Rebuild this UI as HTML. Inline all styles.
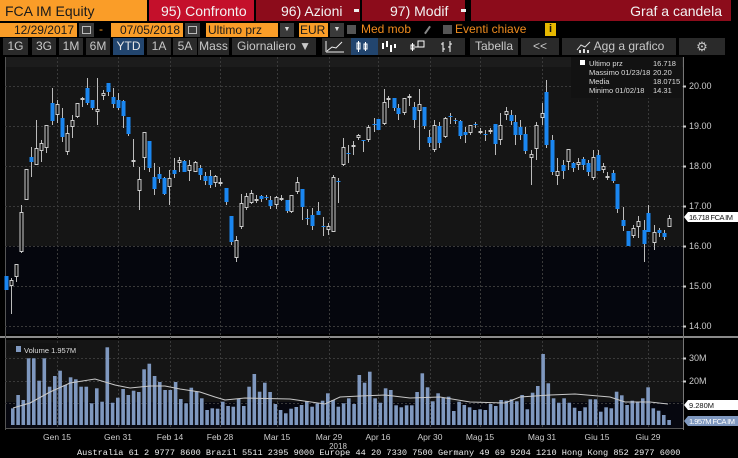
<!DOCTYPE html>
<html><head><meta charset="utf-8"><style>
*{margin:0;padding:0;box-sizing:border-box}
body{width:738px;height:454px;background:#000;overflow:hidden;position:relative;font-family:"Liberation Sans",sans-serif}
.a{position:absolute;white-space:nowrap}
.or{background:#fa9d28;color:#1a1a1a}
.btn{background:#2a2a2a;color:#c8c8c8;font-size:12px;text-align:center;line-height:17px;height:17px;top:38px}
</style></head><body>
<!-- row 1 -->
<div class="a or" style="left:0;top:0;width:147px;height:21px;font-size:14px;line-height:22px;padding-left:5px">FCA IM Equity</div>
<div class="a" style="left:149px;top:0;width:105px;height:21px;background:#c4102b;color:#f2f2f2;font-size:14px;line-height:22px;padding-left:12px">95) Confronto</div>
<div class="a" style="left:256px;top:0;width:104px;height:21px;background:#8c0c1b;color:#f2f2f2;font-size:14px;line-height:22px;padding-left:25px">96) Azioni</div>
<div class="a" style="left:354px;top:9px;width:5px;height:3px;background:#eee"></div>
<div class="a" style="left:362px;top:0;width:103px;height:21px;background:#8c0c1b;color:#f2f2f2;font-size:14px;line-height:22px;padding-left:28px">97) Modif</div>
<div class="a" style="left:461px;top:9px;width:5px;height:3px;background:#eee"></div>
<div class="a" style="left:471px;top:0;width:260px;height:21px;background:#8c0c1b;color:#f2f2f2;font-size:14px;line-height:22px;text-align:right;padding-right:9px">Graf a candela</div>
<!-- row 2 -->
<div class="a or" style="left:0;top:23px;width:77px;height:14px;font-size:12px;line-height:14px;text-align:right;padding-right:3px">12/29/2017</div>
<div class="a" style="left:79px;top:23px;width:15px;height:14px;background:#3a3a3a"></div>
<div class="a" style="left:82px;top:26px;width:9px;height:8px;border:1px solid #bbb"></div>
<div class="a" style="left:99px;top:22px;color:#fa9d28;font-size:12px">-</div>
<div class="a or" style="left:111px;top:23px;width:72px;height:14px;font-size:12px;line-height:14px;text-align:right;padding-right:3px">07/05/2018</div>
<div class="a" style="left:185px;top:23px;width:15px;height:14px;background:#3a3a3a"></div>
<div class="a" style="left:188px;top:26px;width:9px;height:8px;border:1px solid #bbb"></div>
<div class="a or" style="left:206px;top:23px;width:72px;height:14px;font-size:12px;line-height:14px;padding-left:2px">Ultimo prz</div>
<div class="a" style="left:280px;top:23px;width:14px;height:14px;background:#3a3a3a;color:#ddd;font-size:7px;text-align:center;line-height:14px">▼</div>
<div class="a or" style="left:299px;top:23px;width:29px;height:14px;font-size:12px;line-height:14px;padding-left:1px">EUR</div>
<div class="a" style="left:330px;top:23px;width:14px;height:14px;background:#3a3a3a;color:#ddd;font-size:7px;text-align:center;line-height:14px">▼</div>
<div class="a" style="left:347px;top:25px;width:9px;height:9px;background:#555"></div>
<div class="a" style="left:361px;top:22px;color:#f08c1e;font-size:12px">Med mob</div>
<div class="a" style="left:423px;top:29px;width:9px;height:2px;background:#888;transform:rotate(-55deg)"></div>
<div class="a" style="left:443px;top:25px;width:9px;height:9px;background:#555"></div>
<div class="a" style="left:455px;top:22px;color:#f08c1e;font-size:12px">Eventi chiave</div>
<div class="a" style="left:545px;top:23px;width:11px;height:13px;background:#e6b800;color:#111;font-size:11px;text-align:center;line-height:13px;font-weight:bold">i</div>
<!-- row 3 -->
<div class="a btn" style="left:3px;width:25px">1G</div>
<div class="a btn" style="left:32px;width:24px">3G</div>
<div class="a btn" style="left:59px;width:24px">1M</div>
<div class="a btn" style="left:86px;width:24px">6M</div>
<div class="a btn" style="left:113px;width:31px;background:#22456e;color:#e8e8e8">YTD</div>
<div class="a btn" style="left:147px;width:24px">1A</div>
<div class="a btn" style="left:173px;width:24px">5A</div>
<div class="a btn" style="left:198px;width:31px">Mass</div>
<div class="a btn" style="left:232px;width:84px">Giornaliero ▼</div>
<div class="a btn" style="left:322px;width:143px"></div>
<div class="a" style="left:351px;top:38px;width:27px;height:17px;background:#22456e"></div>
<svg class="a" style="left:322px;top:38px" width="143" height="17">
<polyline points="5,13 10,9 14,10 20,4" fill="none" stroke="#eee" stroke-width="1"/><line x1="4" y1="3" x2="4" y2="14" stroke="#eee"/><line x1="4" y1="14" x2="22" y2="14" stroke="#eee"/>
<g stroke="#fff" fill="none"><rect x="35" y="5" width="3" height="6"/><line x1="36.5" y1="3" x2="36.5" y2="14"/><rect x="42" y="6" width="3" height="5"/><line x1="43.5" y1="4" x2="43.5" y2="13"/></g>
<g fill="#fff"><rect x="60" y="5" width="2" height="6"/><rect x="64" y="3" width="2" height="6"/><rect x="68" y="7" width="2" height="7"/><rect x="72" y="6" width="2" height="4"/></g>
<g stroke="#fff" fill="none"><rect x="89" y="7" width="3" height="4"/><line x1="90.5" y1="5" x2="90.5" y2="13"/><rect x="96" y="3" width="6" height="6"/><line x1="93" y1="9" x2="96" y2="9"/></g>
<g stroke="#fff"><line x1="121" y1="4" x2="121" y2="14"/><line x1="119" y1="6" x2="121" y2="6"/><line x1="121" y1="11" x2="123" y2="11"/><line x1="128" y1="3" x2="128" y2="14"/><line x1="126" y1="9" x2="128" y2="9"/><line x1="128" y1="6" x2="130" y2="6"/></g>
</svg>
<div class="a btn" style="left:470px;width:48px">Tabella</div>
<div class="a btn" style="left:521px;width:38px">&lt;&lt;</div>
<div class="a btn" style="left:562px;width:114px;padding-left:20px">Agg a grafico</div>
<svg class="a" style="left:576px;top:41px" width="16" height="12"><polyline points="1,9 5,4 9,6 14,1" fill="none" stroke="#ddd"/><g fill="#ddd"><rect x="3" y="9" width="2" height="3"/><rect x="7" y="8" width="2" height="4"/><rect x="11" y="9" width="2" height="3"/></g></svg>
<div class="a btn" style="left:679px;width:46px;font-size:13px">⚙</div>

<svg id="ch" class="a" style="left:0;top:57px" width="738" height="397"></svg>
<div class="a" style="left:77px;top:448px;width:661px;overflow:hidden;font-family:'Liberation Mono',monospace;font-size:8.6px;line-height:10px;color:#eee">Australia 61 2 9777 8600 Brazil 5511 2395 9000 Europe 44 20 7330 7500 Germany 49 69 9204 1210 Hong Kong 852 2977 6000</div>

<script>
var s='',O=57;
function Y(y){return y-O}
s+='<rect x="5" y="0" width="678" height="10" fill="#1c1c1c"/>';
s+='<rect x="5" y="10" width="678" height="'+(246-67)+'" fill="#151515"/>';
s+='<rect x="5" y="'+Y(246)+'" width="678" height="'+(334-246)+'" fill="#05060d"/>';
s+='<rect x="0" y="'+Y(336)+'" width="738" height="2" fill="#8a8a8a"/>';
s+='<rect x="5" y="'+Y(340)+'" width="678" height="62" fill="#151515"/>';
s+='<rect x="5" y="'+Y(402)+'" width="678" height="26" fill="#06070f"/>';
s+='<line x1="5.5" y1="0" x2="5.5" y2="'+Y(430)+'" stroke="#555"/>';
s+='<line x1="683.5" y1="0" x2="683.5" y2="'+Y(430)+'" stroke="#777"/>';
s+='<line x1="5" y1="'+Y(428.5)+'" x2="683" y2="'+Y(428.5)+'" stroke="#555"/>';
var vx=[57,118,170,220,277,329,378,430,480,542,597,648];
var vl=['Gen 15','Gen 31','Feb 14','Feb 28','Mar 15','Mar 29','Apr 16','Apr 30','Mag 15','Mag 31','Giu 15','Giu 29'];
vx.forEach(function(x,i){s+='<line x1="'+(x+.5)+'" y1="0" x2="'+(x+.5)+'" y2="'+Y(428)+'" stroke="#3a3a3a" stroke-dasharray="2,2"/>';
s+='<text x="'+x+'" y="'+Y(440)+'" fill="#ccc" font-size="8.5" text-anchor="middle">'+vl[i]+'</text>';});
s+='<text x="338" y="'+Y(449)+'" fill="#ccc" font-size="8" text-anchor="middle">2018</text>';
[20,19,18,17,16,15,14].forEach(function(p){var y=86+(20-p)*40;s+='<line x1="5" y1="'+(Y(y)+.5)+'" x2="683" y2="'+(Y(y)+.5)+'" stroke="#3a3a3a" stroke-dasharray="2,2"/>';
s+='<rect x="683" y="'+(Y(y)-.5)+'" width="3" height="2" fill="#ccc"/><text x="689" y="'+(Y(y)+3)+'" fill="#ccc" font-size="9">'+p.toFixed(2)+'</text>';});
[[358,'30M'],[381,'20M']].forEach(function(a){s+='<line x1="5" y1="'+(Y(a[0])+.5)+'" x2="683" y2="'+(Y(a[0])+.5)+'" stroke="#3a3a3a" stroke-dasharray="2,2"/><rect x="683" y="'+(Y(a[0])-.5)+'" width="3" height="2" fill="#ccc"/><text x="689" y="'+(Y(a[0])+3)+'" fill="#ccc" font-size="9">'+a[1]+'</text>';});
s+='<line x1="5" y1="'+(Y(403)+.5)+'" x2="683" y2="'+(Y(403)+.5)+'" stroke="#3a3a3a" stroke-dasharray="2,2"/>';
var v1=[235,195,210,85,85,152,85,170,138,122,165,142,148,170,170,220,175,215,52,218,203,177,195,182,186,118,101,138,156,180,180,156,207,220,173,185,205,240,235,236,215,228,230,207,228,170,132,185,158,186,222,240,250,236,231,225,213,230,220,212,190,210,230,220,205,222,135,158,125];
var v2=[205,218,175,180,226,232,226,226,186,130,172,214,190,203,200,243,215,225,232,240,238,240,222,228,210,212,208,214,195,238,188,168,72,160,205,218,205,218,233,243,232,208,208,245,232,235,185,196,225,212,215,205,172,235,242,255,270];
var vv=v1.concat(v2);
vv.forEach(function(z,i){var x=11+i*5.25,t=330+z/3;s+='<rect x="'+x.toFixed(1)+'" y="'+Y(t).toFixed(1)+'" width="3.6" height="'+(425-t).toFixed(1)+'" fill="#7f98bf"/>';});
var ma=[[13,408],[30,403],[50,392],[70,383],[95,379],[115,385],[130,388],[150,386],[165,386],[180,389],[200,392],[215,397],[225,400],[245,398],[290,399],[325,404],[340,397],[360,396],[385,395],[410,398],[440,397],[470,402],[505,403],[520,397],[550,395],[575,394],[610,397],[625,402],[650,402],[668,404]];
s+='<polyline fill="none" stroke="#c8c8c8" stroke-width="1" points="'+ma.map(function(p){return p[0]+','+Y(p[1])}).join(' ')+'"/>';
var C=[[6,276,290,276,290,1],[11,280,286,278,314,0],[16,264,277,264,282,0],[21,212,252,205,253,0],[26,169,200,169,200,0],[31,157,162,147,177,1],[36,148,165,120,165,0],[41,143,151,140,162,0],[46,125,148,125,153,0],[52,103,121,88,125,1],[57,104,115,100,123,0],[62,118,137,108,142,1],[67,133,152,125,155,0],[72,120,127,115,138,0],[77,103,117,103,118,0],[82,98,100,97,107,0],[87,88,103,78,105,1],[92,100,108,100,110,1],[97,109,112,78,125,0],[103,93,96,90,100,0],[108,83,92,83,96,1],[113,97,104,88,108,1],[118,100,108,93,110,1],[123,101,116,100,128,1],[128,117,134,117,136,1],[133,160,161,139,167,0],[139,179,191,167,210,0],[144,132,158,132,170,0],[149,141,168,141,172,1],[154,177,189,163,195,1],[159,174,179,167,183,1],[164,178,194,177,195,1],[169,178,187,170,205,0],[174,170,174,158,178,1],[179,160,163,157,172,0],[184,161,172,160,172,1],[189,165,171,160,181,0],[195,162,172,161,172,0],[200,168,175,165,180,1],[205,176,181,172,185,1],[210,176,185,170,188,1],[215,176,183,175,187,0],[220,182,183,178,186,0],[226,188,202,188,205,1],[231,216,242,216,245,1],[236,240,258,236,262,0],[241,203,227,194,229,0],[246,196,208,193,210,0],[251,193,203,190,204,0],[256,199,200,195,203,0],[261,196,199,195,202,1],[266,197,198,195,200,1],[270,200,206,196,209,1],[276,197,205,196,209,0],[281,198,199,195,201,0],[287,200,211,200,213,1],[291,195,212,195,213,0],[297,182,192,177,194,0],[302,189,207,189,220,1],[307,218,219,209,225,1],[312,215,226,208,230,1],[318,211,215,202,215,1],[323,226,227,217,236,1],[328,226,230,223,235,0],[333,177,232,175,232,0],[338,181,182,178,203,1],[343,147,165,138,166,0],[348,153,154,145,163,1],[353,145,147,141,155,0],[358,135,138,134,140,0],[363,140,141,140,152,1],[368,127,140,125,142,0],[374,124,125,118,132,1],[378,119,130,119,130,1],[384,102,124,89,125,0],[388,98,100,96,108,0],[394,98,108,98,111,1],[398,108,114,104,120,1],[404,98,113,98,115,0],[409,96,98,94,106,0],[414,107,120,102,128,1],[419,104,111,89,150,0],[424,107,126,107,129,1],[429,137,143,130,147,1],[434,125,150,120,152,0],[439,126,143,122,148,1],[445,118,137,117,138,0],[450,116,117,113,124,1],[455,120,121,118,124,1],[460,121,136,120,139,1],[465,132,135,127,143,1],[470,125,133,125,135,0],[475,124,125,122,128,1],[480,131,132,128,134,0],[485,134,135,130,141,1],[490,130,131,128,134,0],[495,124,144,124,155,1],[500,125,140,113,145,0],[506,111,115,107,120,0],[511,115,121,110,125,1],[515,122,135,115,145,1],[520,127,135,120,140,1],[525,134,151,127,154,1],[531,154,158,150,185,0],[536,125,149,122,160,0],[542,113,118,103,125,0],[546,92,145,80,148,1],[552,140,172,135,175,1],[557,171,176,158,185,0],[563,165,171,160,179,1],[568,149,162,149,170,0],[573,163,168,162,172,1],[578,162,165,158,170,0],[583,159,165,157,170,1],[588,163,172,160,176,1],[593,157,178,150,180,0],[598,155,171,150,171,1],[603,166,170,163,173,0],[607,176,177,172,180,0],[613,173,181,170,183,1],[617,184,209,184,213,1],[623,220,226,207,231,1],[628,231,246,231,246,1],[633,228,236,225,238,0],[638,221,227,216,238,0],[644,230,244,220,262,1],[648,213,232,205,232,1],[654,232,243,225,250,0],[659,230,233,228,237,1],[664,233,237,230,240,1],[669,218,227,215,227,0]];
C.forEach(function(c){var x=c[0];s+='<line x1="'+(x+.5)+'" y1="'+Y(c[3])+'" x2="'+(x+.5)+'" y2="'+Y(c[4])+'" stroke="#bbb"/>';
var h=Math.max(c[2]-c[1],1);
if(c[5])s+='<rect x="'+(x-1.5)+'" y="'+Y(c[1])+'" width="4" height="'+h+'" fill="#1a86f0"/>';
else s+='<rect x="'+(x-1)+'" y="'+(Y(c[1])+.5)+'" width="3" height="'+Math.max(h-1,1)+'" fill="#111" stroke="#ccc" stroke-width="1"/>';});
s+='<rect x="571" y="0" width="111" height="41" fill="#121212"/>';
var lg=[['Ultimo prz','16.718'],['Massimo 01/23/18','20.20'],['Media','18.0715'],['Minimo 01/02/18','14.31']];
s+='<rect x="580" y="3" width="5" height="5" fill="#fff"/>';
lg.forEach(function(l,i){s+='<text x="589" y="'+(9+i*9)+'" fill="#ddd" font-size="7.5">'+l[0]+'</text><text x="653" y="'+(9+i*9)+'" fill="#ddd" font-size="7.5">'+l[1]+'</text>';});
var ty=Y(217);s+='<polygon points="684,'+ty+' 688,'+(ty-5)+' 738,'+(ty-5)+' 738,'+(ty+5)+' 688,'+(ty+5)+'" fill="#fff"/><text x="689" y="'+(ty+3)+'" fill="#111" font-size="7.5" textLength="44">16.718 FCA IM</text>';
var t2=Y(405);s+='<polygon points="684,'+t2+' 688,'+(t2-5)+' 738,'+(t2-5)+' 738,'+(t2+5)+' 688,'+(t2+5)+'" fill="#fff"/><text x="689" y="'+(t2+3)+'" fill="#111" font-size="7.5">9.280M</text>';
var t3=Y(421);s+='<polygon points="684,'+t3+' 688,'+(t3-5)+' 738,'+(t3-5)+' 738,'+(t3+5)+' 688,'+(t3+5)+'" fill="#7f98bf"/><text x="689" y="'+(t3+3)+'" fill="#fff" font-size="7.5" textLength="46">1.957M FCA IM</text>';
s+='<rect x="7" y="'+Y(343)+'" width="70" height="13" fill="#121212"/><rect x="16" y="'+Y(346)+'" width="5" height="6" fill="#7f98bf"/><text x="24" y="'+Y(353)+'" fill="#ddd" font-size="7.5">Volume 1.957M</text>';
document.getElementById('ch').innerHTML=s;
</script>
</body></html>
